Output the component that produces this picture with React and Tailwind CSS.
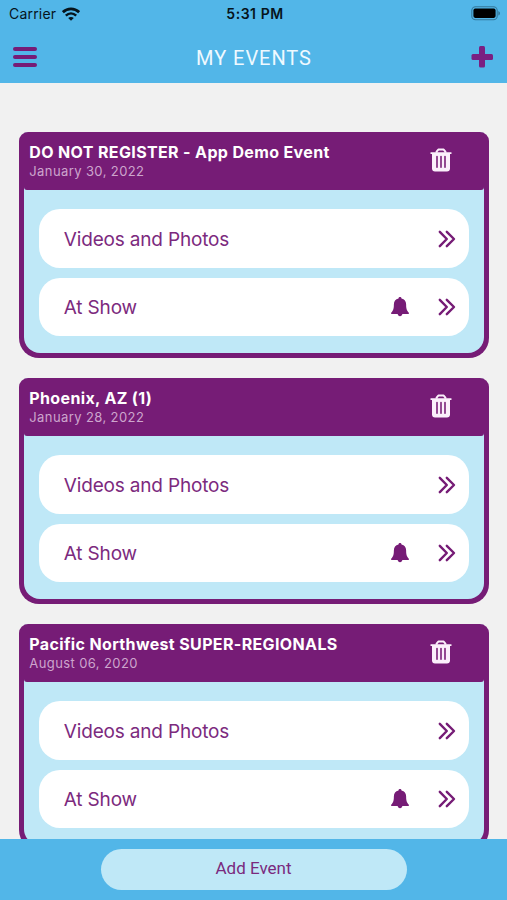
const events = [
  { id: 1, name: "DO NOT REGISTER - App Demo Event", date: "January 30, 2022" },
  { id: 2, name: "Phoenix, AZ (1)", date: "January 28, 2022" },
  { id: 3, name: "Pacific Northwest SUPER-REGIONALS", date: "August 06, 2020" },
];

function WifiIcon() {
  return (
    <svg width="18" height="14" viewBox="0 0 18 14" fill="none" stroke="#06141c">
      <path d="M.8 5.2C5.4 .8 12.6 .8 17.2 5.2" strokeWidth="2.9" />
      <path d="M3.8 8.7C6.9 5.8 11.1 5.8 14.2 8.7" strokeWidth="2.5" />
      <path d="M9 13.8L6.2 11C7.8 9.6 10.2 9.6 11.8 11Z" fill="#06141c" stroke="none" />
    </svg>
  );
}

function BatteryIcon() {
  return (
    <svg width="30" height="15" viewBox="0 0 30 15">
      <rect x=".8" y=".8" width="25.4" height="12.9" rx="3.8" fill="none" stroke="#34789a" strokeWidth="1.1" />
      <rect x="2.4" y="2.6" width="22.2" height="9.3" rx="1.8" fill="#000" />
      <path d="M27.3 5v4.6c1-.4 1.7-1.3 1.7-2.3s-.7-1.9-1.7-2.3z" fill="#34789a" />
    </svg>
  );
}

function TrashIcon() {
  return (
    <svg width="22" height="24" viewBox="0 0 22 24">
      <path d="M6.6 4.8V3.6l1.7-2h5.4l1.7 2v1.2" fill="none" stroke="#fbeffb" strokeWidth="2" strokeLinejoin="round" />
      <path
        d="M.9 4.2h20.2c.3 0 .5.2.5.5v.9c0 .3-.2.5-.5.5H20v14.400c0 1.800-1.200 3-3 3H5c-1.800 0-3-1.200-3-3V6.100H.9c-.3 0-.5-.2-.5-.5v-.9c0-.3.200-.5.500-.5z"
        fill="#fbeffb"
      />
      <path d="M7 8.500v10.800M11 8.500v10.800M15 8.500v10.800" stroke="#7a1f78" strokeWidth="1.6" strokeLinecap="round" />
    </svg>
  );
}

function BellIcon() {
  return (
    <svg width="18" height="20" viewBox="0 0 18 20" fill="#761c76">
      <path d="M9 0c.9 0 1.500.6 1.500 1.400 3.100.7 4.600 2.900 4.600 5.700 0 4.400.5 6.600 2.700 8.600.3.300.2 1.300-.4 1.300H.6c-.6 0-.7-1-.4-1.300 2.200-2 2.700-4.200 2.700-8.600 0-2.800 1.500-5 4.600-5.700C7.500.6 8.100 0 9 0z" />
      <path d="M6.600 16.500h4.800c-.2 1.700-1.100 2.700-2.400 2.700s-2.200-1-2.400-2.700z" />
    </svg>
  );
}

function ChevronsIcon() {
  return (
    <svg width="18" height="18" viewBox="0 0 18 18" fill="none" stroke="#761c76" strokeWidth="2.4" strokeLinecap="round" strokeLinejoin="round">
      <path d="M1.800 1.800L8.800 9l-7 7.200M8.800 1.800L16 9l-7.200 7.200" />
    </svg>
  );
}

function EventRow({ label, bell }) {
  return (
    <button className="flex h-[58.5px] w-full items-center rounded-[21px] bg-white pr-[12.5px] pl-[24.5px] text-left">
      <span className="flex-1 pt-[3px] text-[19px] leading-6 tracking-[-0.17px] text-[#7c2a7e]">{label}</span>
      {bell && (
        <span className="mr-[29px]">
          <BellIcon />
        </span>
      )}
      <span className="pt-px">
        <ChevronsIcon />
      </span>
    </button>
  );
}

function EventCard({ event }) {
  return (
    <div className="h-[226.5px] shrink-0 overflow-hidden rounded-t-[9px] rounded-b-[20px] bg-[#761c76] px-[5px] pb-[5px]">
      <div className="h-full overflow-hidden rounded-b-[16px] bg-[#bfe8f7]">
        <div className="flex h-[58px] justify-between rounded-b-[3px] bg-[#761c76] pr-8 pl-[5px]">
          <div className="pt-[10px]">
            <h2 className="text-[16px] leading-[20px] font-bold tracking-[0.36px] text-white">
              {event.name}
            </h2>
            <p className="text-[13px] leading-[18px] tracking-[0.4px] text-[#cda5cd]">{event.date}</p>
          </div>
          <button className="flex h-10 items-end">
            <TrashIcon />
          </button>
        </div>
        <div className="flex flex-col gap-[10px] px-[15px] pt-[19.5px]">
          <EventRow label="Videos and Photos" />
          <EventRow label="At Show" bell />
        </div>
      </div>
    </div>
  );
}

function App() {
  return (
    <div className="flex h-[900px] w-[507px] flex-col overflow-hidden bg-[#f1f1f1] font-['Inter',sans-serif]">
      <header className="h-[82.5px] shrink-0 bg-[#52b6e8]">
        <div className="grid h-[27px] grid-cols-3 items-center pr-[6px] pl-[9px] text-[14px] text-[#06141c]">
          <div className="flex items-center gap-[6px]">
            <span className="tracking-[0.2px]">Carrier</span>
            <WifiIcon />
          </div>
          <span className="text-center font-semibold tracking-[0.55px]">5:31 PM</span>
          <div className="flex justify-end">
            <BatteryIcon />
          </div>
        </div>
        <div className="flex h-[60px] items-center justify-between pr-[14px] pl-[13px]">
          <button className="flex w-6 flex-col gap-1">
            <span className="h-[3.7px] rounded-sm bg-[#761c76]" />
            <span className="h-[3.7px] rounded-sm bg-[#761c76]" />
            <span className="h-[3.7px] rounded-sm bg-[#761c76]" />
          </button>
          <h1 className="pt-px font-['Roboto',sans-serif] text-[20px] tracking-[0.95px] text-[#eef9ff]">
            MY EVENTS
          </h1>
          <button>
            <svg width="22" height="22" viewBox="0 0 22 22" fill="#7a1f82">
              <rect x="8" y="0" width="6" height="21.5" rx="1.5" />
              <rect x=".5" y="8" width="21.5" height="6" rx="1.5" />
            </svg>
          </button>
        </div>
      </header>

      <main className="flex min-h-0 flex-1 flex-col gap-[19.6px] overflow-hidden pt-[49px] pr-[18.5px] pl-[19.3px]">
        {events.map((event) => (
          <EventCard key={event.id} event={event} />
        ))}
      </main>

      <footer className="flex h-[61px] shrink-0 justify-center bg-[#52b6e8] pt-[10px]">
        <button className="h-[41px] w-[306px] rounded-full bg-[#bfe8f7] pb-px font-['Roboto',sans-serif] text-[17px] text-[#7a2a7e]">
          Add Event
        </button>
      </footer>
    </div>
  );
}

export default App;
